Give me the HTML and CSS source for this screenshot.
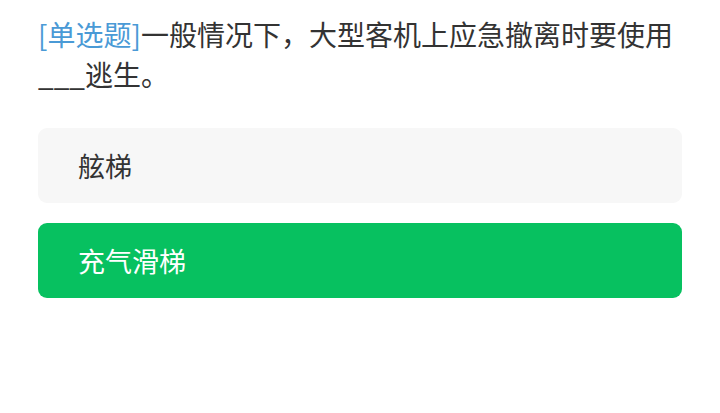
FILE: index.html
```html
<!DOCTYPE html>
<html lang="zh">
<head>
<meta charset="utf-8">
<link rel="stylesheet" href="styles.css">
</head>
<body>
<main class="quiz">
  <p class="question"><span class="tag">[单选题]</span>一般情况下，大型客机上应急撤离时要使用___逃生。</p>
  <ul class="options">
    <li class="option">舷梯</li>
    <li class="option selected">充气滑梯</li>
  </ul>
</main>
</body>
</html>
```
FILE: styles.css
```css
html, body {
  margin: 0;
  padding: 0;
  background: #ffffff;
}

body {
  font-family: "Noto Sans CJK SC", "Noto Sans", sans-serif;
  color: #333333;
}

.quiz {
  padding: 14px 38px 0 38px;
}

.question {
  margin: 0;
  font-size: 28px;
  line-height: 40px;
  color: #333333;
}

.tag {
  color: #4a9ad6;
}

.options {
  list-style: none;
  margin: 34px 0 0 0;
  padding: 0;
  display: flex;
  flex-direction: column;
  gap: 20px;
}

.option {
  height: 75px;
  display: flex;
  align-items: center;
  padding-left: 40px;
  border-radius: 9px;
  background: #f7f7f7;
  font-size: 27px;
  color: #333333;
}

.option.selected {
  background: #07c160;
  color: #ffffff;
}
```
